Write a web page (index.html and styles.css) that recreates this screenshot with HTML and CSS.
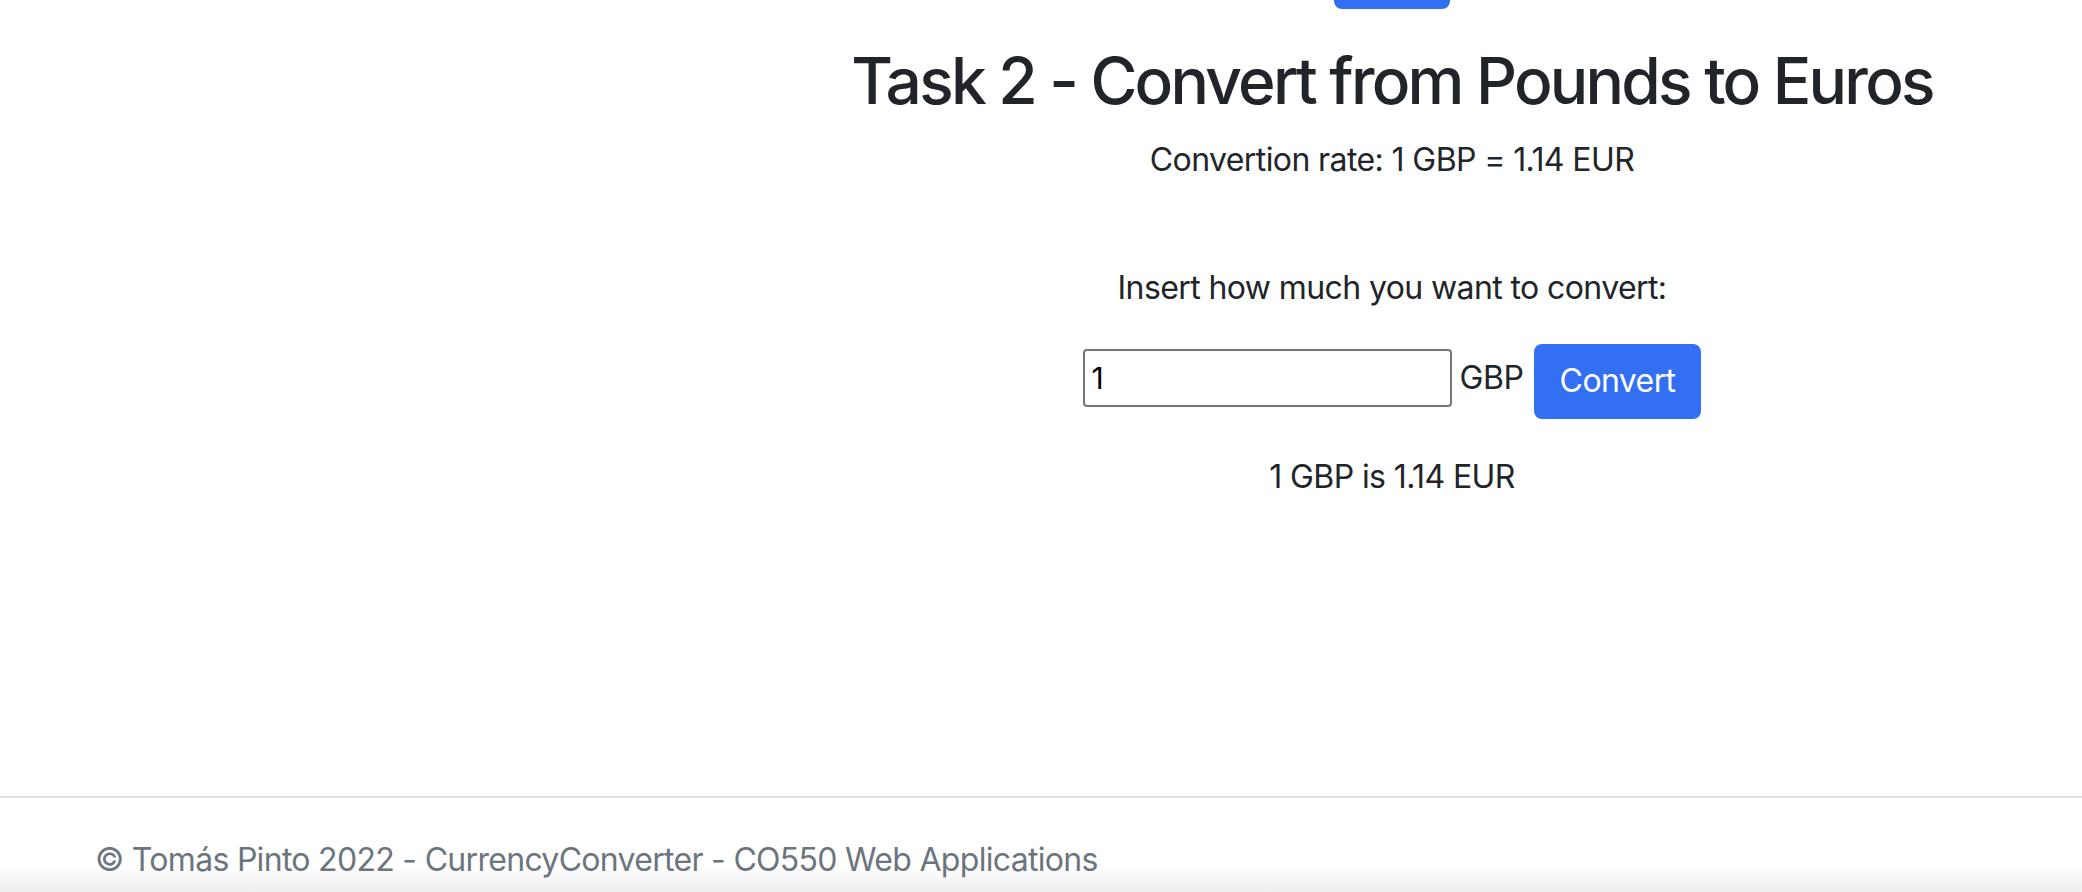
FILE: index.html
```html
<!DOCTYPE html>
<html lang="en">
<head>
<meta charset="utf-8">
<title>CurrencyConverter</title>
<link rel="stylesheet" href="styles.css">
</head>
<body>
<main class="main">
  <div class="top-btn"></div>
  <h2 class="title">Task 2 - Convert from Pounds to Euros</h2>
  <p class="rate">Convertion rate: 1 GBP = 1.14 EUR</p>
  <p class="prompt">Insert how much you want to convert:</p>
  <form class="row">
    <input class="amount" type="text" value="1">
    <span class="unit">GBP</span>
    <button class="btn" type="button">Convert</button>
  </form>
  <p class="result">1 GBP is 1.14 EUR</p>
</main>
<footer class="footer">
  <div class="footer-text">© Tomás Pinto 2022 - CurrencyConverter - CO550 Web Applications</div>
</footer>
</body>
</html>
```
FILE: styles.css
```css
html, body {
  margin: 0;
  padding: 0;
}
body {
  height: 892px;
  display: flex;
  flex-direction: column;
  font-family: Inter, "Noto Sans", sans-serif;
  color: #212529;
  background: #fff;
  overflow: hidden;
}
.main {
  flex: 1;
  display: flex;
  flex-direction: column;
  align-items: center;
  padding-left: 702px;
  text-align: center;
}
.top-btn {
  width: 116px;
  height: 9px;
  background: #336ff2;
  border-radius: 0 0 8px 8px;
}
.title {
  margin: 34px 0 0;
  font-size: 64px;
  font-weight: 500;
  line-height: 1.2;
  letter-spacing: -2.75px;
  white-space: nowrap;
}
.rate, .prompt, .result {
  margin: 0;
  font-size: 32px;
  line-height: 48px;
  letter-spacing: -0.6px;
  white-space: nowrap;
}
.rate {
  margin-top: 16px;
}
.prompt {
  margin-top: 80px;
}
.row {
  margin: 32px 0 0;
  display: flex;
  align-items: flex-start;
  gap: 10px;
}
.amount {
  margin-top: 5px;
  box-sizing: border-box;
  width: 369px;
  height: 58px;
  border: 2px solid #767676;
  border-radius: 4px;
  padding: 0 7px;
  font-family: Inter, "Noto Sans", sans-serif;
  font-size: 30px;
  color: #000;
  background: #fff;
}
.unit {
  margin-top: 10px;
  margin-left: -2px;
  font-size: 32px;
  line-height: 48px;
  letter-spacing: -0.4px;
}
.btn {
  box-sizing: border-box;
  height: 75px;
  padding: 0 26px;
  border: none;
  border-radius: 8px;
  background: #336ff2;
  color: #fff;
  font-family: Inter, "Noto Sans", sans-serif;
  font-size: 32px;
  line-height: 48px;
  letter-spacing: -0.6px;
}
.result {
  margin-top: 34px;
}
.footer {
  height: 96px;
  box-sizing: border-box;
  border-top: 2px solid #dee2e6;
  padding: 38px 0 0 95px;
  background: linear-gradient(to bottom, #fff 0%, #fff 72%, #eeeeee 100%);
}
.footer-text {
  font-size: 32px;
  line-height: 48px;
  letter-spacing: -0.7px;
  color: #6c757d;
  white-space: nowrap;
}
```
